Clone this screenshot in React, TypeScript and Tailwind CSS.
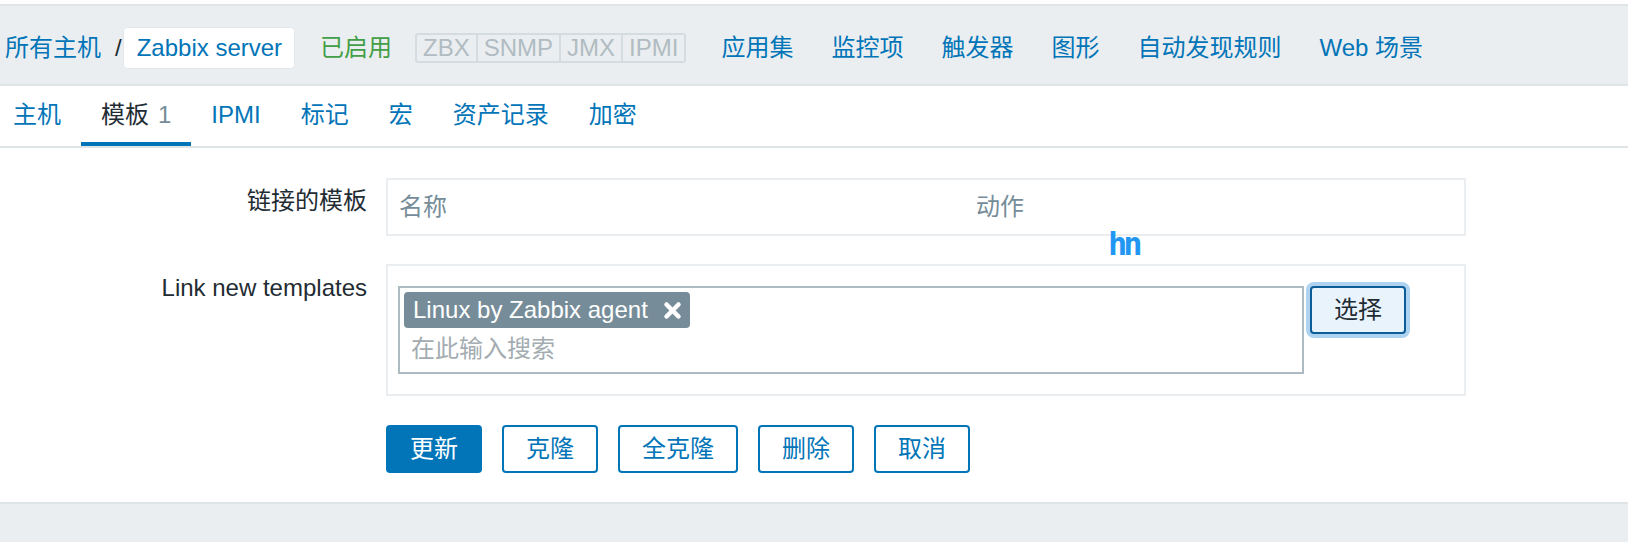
import React from 'react'

const headerLinks = ['应用集', '监控项', '触发器', '图形', '自动发现规则', 'Web 场景']
const statusTags = ['ZBX', 'SNMP', 'JMX', 'IPMI']
const tabs = ['主机', '模板', 'IPMI', '标记', '宏', '资产记录', '加密']
const actions = ['克隆', '全克隆', '删除', '取消']

function Header() {
  return (
    <div className="border-t-4 border-white">
      <div className="border-y-2 border-[#dfe4e7] bg-[#ebeef0] pt-[21px] pb-[15px] pl-[5px]">
        <div className="flex h-[42px] items-center">
          <a className="text-[#0275b8]">所有主机</a>
          <span className="ml-[14px] text-[#1f2c33]">/</span>
          <span className="ml-[1px] flex h-[42px] items-center rounded-[4px] border border-[#e3e7ea] bg-white pl-[13px] pr-[12px] text-[#0275b8]">
            Zabbix server
          </span>
          <span className="ml-[25px] text-[#429e47]">已启用</span>
          <div className="ml-[23px] flex h-[30px] items-center rounded-[3px] border-2 border-[#d5dce0] text-[#b0bcc2]">
            {statusTags.map((t, i) => (
              <span
                key={t}
                className={
                  'flex h-full items-center px-[6px] leading-none ' + (i > 0 ? 'border-l-2 border-[#d5dce0]' : '')
                }
              >
                {t}
              </span>
            ))}
          </div>
          <div className="ml-[35px] flex gap-[38px] text-[#0275b8]">
            {headerLinks.map((l) => (
              <a key={l}>{l}</a>
            ))}
          </div>
        </div>
      </div>
    </div>
  )
}

function Tabs() {
  return (
    <div className="flex border-b-2 border-[#dfe4e7] bg-white">
      <div className="-ml-[7px] flex">
        {tabs.map((t) => {
          const active = t === '模板'
          return (
            <div
              key={t}
              className={
                'flex h-[60px] items-center px-[20px] pt-[1px] border-b-4 ' +
                (active ? 'border-[#0275b8] text-[#1f2c33]' : 'border-transparent text-[#0275b8]')
              }
            >
              {t}
              {active && <span className="ml-[9px] text-[#768d99]">1</span>}
            </div>
          )
        })}
      </div>
    </div>
  )
}

function XIcon() {
  return (
    <svg width="19" height="19" viewBox="0 0 19 19">
      <path d="M3.5 3.5 L15.5 15.5 M15.5 3.5 L3.5 15.5" stroke="white" strokeWidth="4.5" strokeLinecap="round" />
    </svg>
  )
}

function TemplateForm() {
  return (
    <div className="relative bg-white pt-[30px] pb-[29px] border-b-2 border-[#dfe4e7]">
      <div className="flex">
        <div className="w-[367px] pt-[9px] text-right leading-[28px] text-[#1f2c33]">链接的模板</div>
        <div className="ml-[19px] flex h-[58px] w-[1080px] items-center border-2 border-[#ebeef0] px-[11px] text-[#768d99]">
          <span className="w-[577px]">名称</span>
          <span>动作</span>
        </div>
      </div>

      <div className="mt-[28px] flex">
        <div className="w-[367px] pt-[10px] text-right leading-[28px] text-[#1f2c33]">Link new templates</div>
        <div className="ml-[19px] flex w-[1080px] items-start border-2 border-[#ebeef0] pt-[20px] pb-[20px] pl-[10px]">
          <div className="w-[906px] border-2 border-[#acbbc2] pt-[4px] pb-[9px] pl-[4px]">
            <div className="inline-flex h-[36px] items-center rounded-[4px] bg-[#768d99] pl-[9px] pr-[8px] text-white">
              <span className="leading-none">Linux by Zabbix agent</span>
              <span className="ml-[15px] flex">
                <XIcon />
              </span>
            </div>
            <div className="mt-[7px] pl-[7px] leading-[28px] text-[#a3acb1]">在此输入搜索</div>
          </div>
          <button className="ml-[6px] h-[48px] w-[96px] rounded-[4px] border-2 border-[#0b5c97] bg-[#e8f3fc] text-[#1f2c33] ring-[4px] ring-[#aed3f1]">
            选择
          </button>
        </div>
      </div>

      <div className="mt-[29px] ml-[386px] flex gap-[20px]">
        <button className="rounded-[4px] border-2 border-[#0275b8] bg-[#0275b8] px-[22px] py-[8px] leading-[28px] text-white">
          更新
        </button>
        {actions.map((a) => (
          <button
            key={a}
            className="rounded-[4px] border-2 border-[#0275b8] bg-white px-[22px] py-[8px] leading-[28px] text-[#0275b8]"
          >
            {a}
          </button>
        ))}
      </div>

      <span className="absolute left-[1108px] top-[80px] font-['DejaVu_Sans_Mono',monospace] text-[32px] font-bold leading-none tracking-[-4px] text-[#2196f3]">
        hn
      </span>
    </div>
  )
}

export default function App() {
  return (
    <div className="min-h-screen bg-[#ebeef0] font-['Liberation_Sans','Noto_Sans_CJK_SC',sans-serif] text-[24px] text-[#1f2c33]">
      <Header />
      <Tabs />
      <TemplateForm />
    </div>
  )
}
